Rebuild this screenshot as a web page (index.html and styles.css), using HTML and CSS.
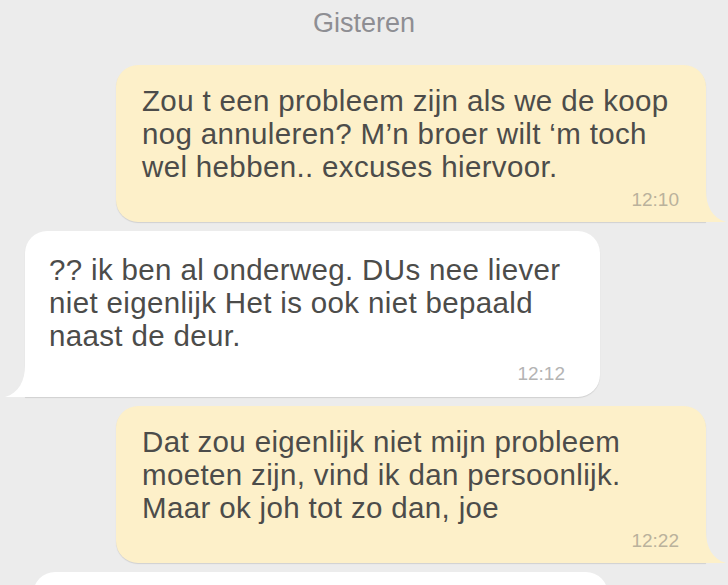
FILE: index.html
```html
<!DOCTYPE html>
<html lang="nl">
<head>
  <meta charset="UTF-8" />
  <title>Chat</title>
  <meta name="viewport" content="width=device-width, initial-scale=1.0" />
  <link rel="stylesheet" href="styles.css">
</head>
<body>
  <div class="chat">
    <div class="day">Gisteren</div>

    <div class="bubble out">
      <p>Zou t een probleem zijn als we de koop nog annuleren? M’n broer wilt ‘m toch wel hebben.. excuses hiervoor.</p>
      <span class="time">12:10</span>
      <svg class="tail" viewBox="0 0 30 32"><path d="M10 0 C10 16 16 28 30 32 L0 32 L0 0 Z" /></svg>
    </div>

    <div class="bubble in">
      <p>?? ik ben al onderweg. DUs nee liever niet eigenlijk Het is ook niet bepaald naast de deur.</p>
      <span class="time">12:12</span>
      <svg class="tail" viewBox="0 0 30 32"><path d="M20 0 C20 16 14 28 0 32 L30 32 L30 0 Z" /></svg>
    </div>

    <div class="bubble out">
      <p>Dat zou eigenlijk niet mijn probleem moeten zijn, vind ik dan persoonlijk. Maar ok joh tot zo dan, joe</p>
      <span class="time">12:22</span>
      <svg class="tail" viewBox="0 0 30 32"><path d="M10 0 C10 16 16 28 30 32 L0 32 L0 0 Z" /></svg>
    </div>

    <div class="bubble in last">
      <p>&nbsp;</p>
    </div>
  </div>
</body>
</html>
```

FILE: styles.css
```css
:root {
  --bg: #ececec;
  --out-bg: #fdf0c9;
  --in-bg: #ffffff;
  --text: #4c4c4a;
}
body {
  margin: 0;
  background: var(--bg);
  font-family: "Liberation Sans", Arial, sans-serif;
  color: var(--text);
  overflow: hidden;
}
.chat {
  display: flex;
  flex-direction: column;
  gap: 9px;
  padding-top: 8px;
}
.day {
  align-self: center;
  font-size: 27px;
  line-height: 30px;
  color: #8e8e93;
  margin-bottom: 18px;
}
.bubble {
  position: relative;
  box-sizing: border-box;
  padding: 19px 27px 12px 26px;
  border-radius: 22px;
  box-shadow: 0 1px 1px rgba(0, 0, 0, 0.12);
  display: flex;
  flex-direction: column;
}
.bubble p {
  margin: 0;
  font-size: 29.5px;
  line-height: 33px;
  letter-spacing: 0.35px;
}
.time {
  align-self: flex-end;
  margin-top: 7px;
  font-size: 19px;
  line-height: 20px;
}
.tail {
  position: absolute;
  bottom: 0;
  width: 30px;
  height: 32px;
}
.out {
  align-self: flex-end;
  width: 590px;
  margin-right: 22px;
  background: var(--out-bg);
  border-bottom-right-radius: 0;
}
.out .time {
  color: #bab29c;
}
.out .tail {
  right: -20px;
  fill: var(--out-bg);
}
.in {
  align-self: flex-start;
  width: 575px;
  margin-left: 25px;
  padding: 22px 35px 13px 24px;
  background: var(--in-bg);
  border-bottom-left-radius: 0;
}
.in .time {
  margin-top: 12px;
  color: #b4b4b4;
}
.in .tail {
  left: -20px;
  fill: var(--in-bg);
}
.last {
  margin-left: 33px;
  min-height: 120px;
  border-bottom-left-radius: 22px;
}
```
